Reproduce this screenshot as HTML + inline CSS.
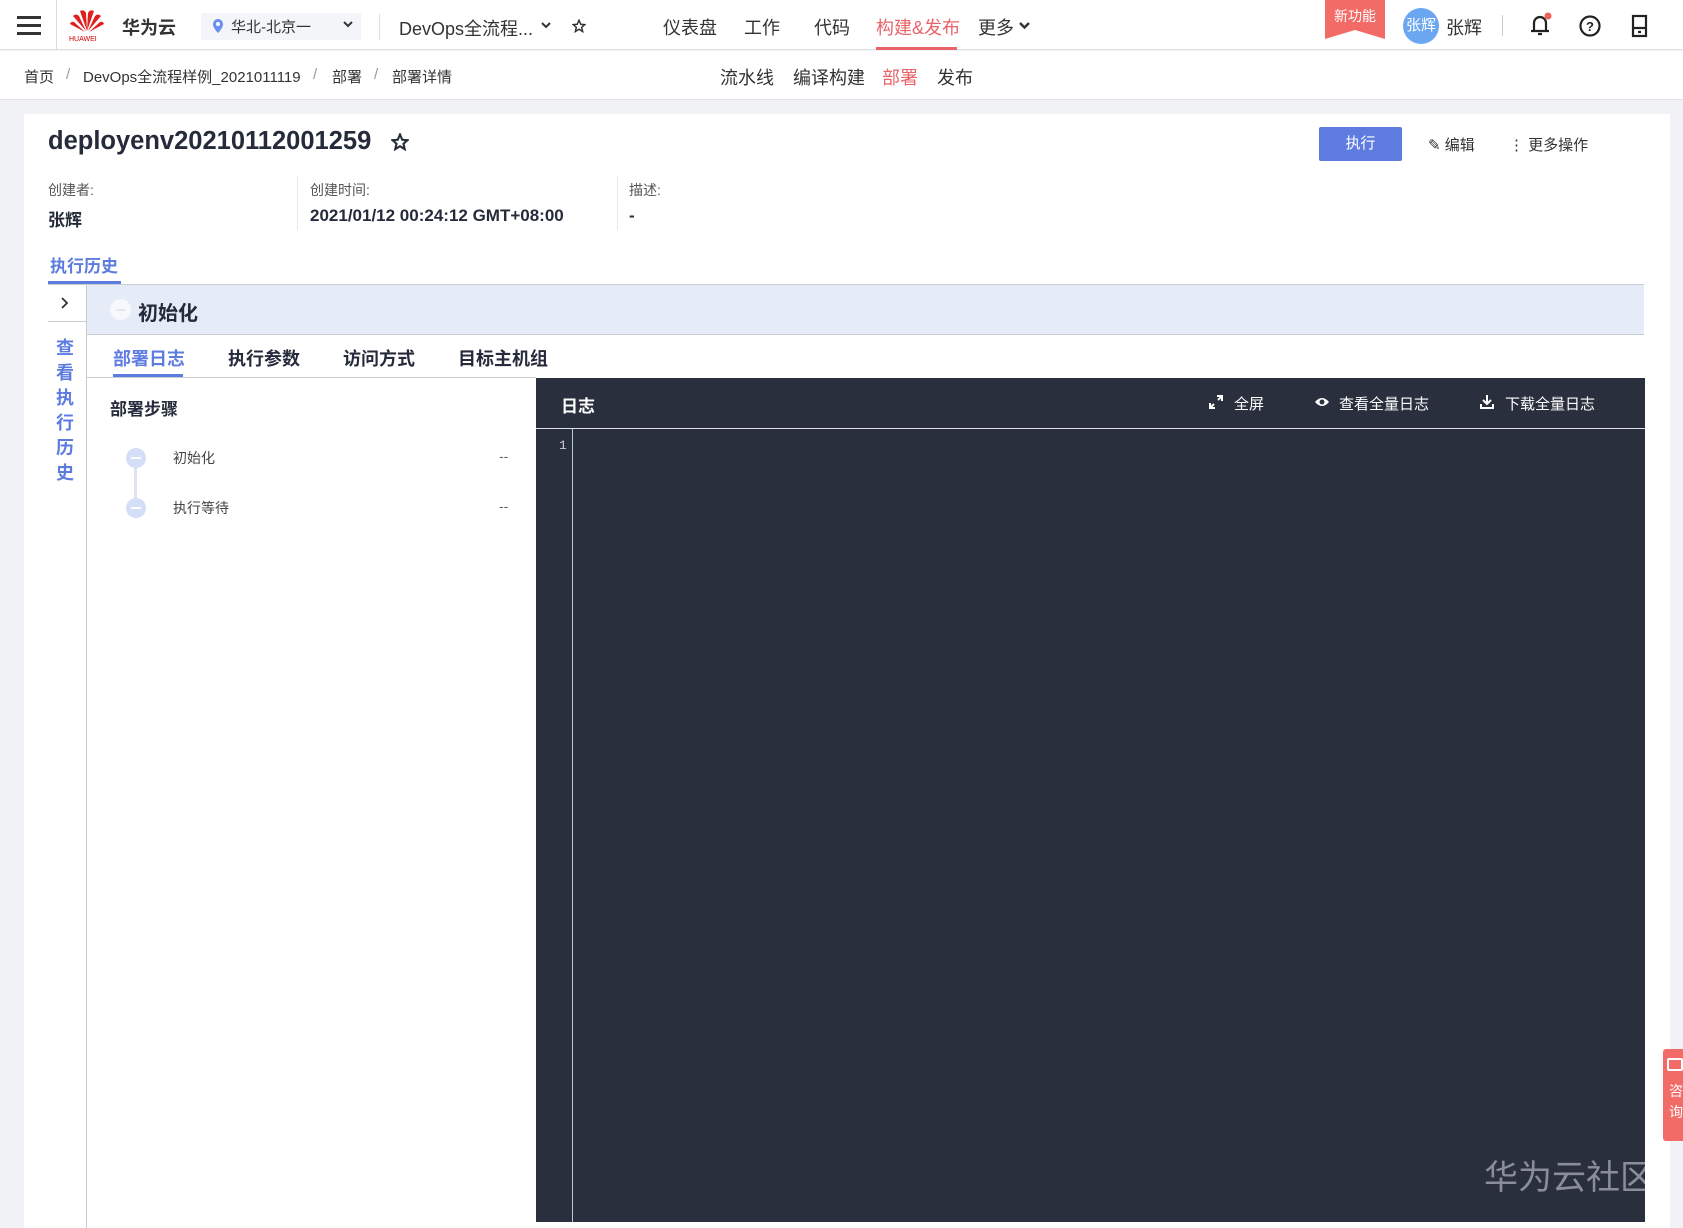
<!DOCTYPE html>
<html><head><meta charset="utf-8">
<style>
*{margin:0;padding:0;box-sizing:border-box}
body{width:1683px;height:1228px;overflow:hidden;background:#f0f2f5;font-family:"Liberation Sans","Noto Sans CJK SC",sans-serif;color:#252b3a;position:relative}
.a{position:absolute;white-space:nowrap}
.bc{position:absolute;top:66px;font-size:15px;color:#333;white-space:nowrap}
</style></head><body>
<!-- header -->
<div class="a" style="left:0;top:0;width:1683px;height:50px;background:#fff;border-bottom:1px solid #dfe1e6"></div>
<div class="a" style="left:17px;top:16px;width:24px;height:3px;background:#333;box-shadow:0 8px 0 #333,0 16px 0 #333"></div>
<div class="a" style="left:56px;top:0;width:1px;height:50px;background:#ddd"></div>
<svg class="a" style="left:68px;top:7px" width="38" height="28" viewBox="0 0 38 28"><g fill="#e0201f"><path d="M19 24 L12 4 Q16 2 18 6Z"/><path d="M19 24 L26 4 Q22 2 20 6Z"/><path d="M18 24 L5 9 Q8 6 11 9Z"/><path d="M20 24 L33 9 Q30 6 27 9Z"/><path d="M17 25 L2 17 Q3 14 6 15Z"/><path d="M21 25 L36 17 Q35 14 32 15Z"/></g></svg>
<div class="a" style="left:69px;top:36px;font-size:7px;color:#c00">HUAWEI</div>
<div class="a" style="left:122px;top:14px;font-size:18px;font-weight:bold;color:#333">华为云</div>
<div class="a" style="left:201px;top:13px;width:160px;height:27px;background:#f3f5f8"></div>
<svg class="a" style="left:212px;top:18px" width="12" height="16"><path d="M6 1a5 5 0 0 1 5 5c0 4-5 9-5 9S1 10 1 6a5 5 0 0 1 5-5z" fill="#6a8ff0"/><circle cx="6" cy="6" r="2" fill="#fff"/></svg>
<div class="a" style="left:231px;top:16px;font-size:15px;color:#333">华北-北京一</div>
<svg class="a" style="left:343px;top:21px" width="10" height="8"><path d="M1 1l4 4 4-4" stroke="#333" stroke-width="2" fill="none"/></svg>
<div class="a" style="left:379px;top:14px;width:1px;height:26px;background:#ddd"></div>
<div class="a" style="left:399px;top:15px;font-size:18px;color:#333">DevOps全流程...</div>
<svg class="a" style="left:541px;top:22px" width="10" height="8"><path d="M1 1l4 4 4-4" stroke="#333" stroke-width="2" fill="none"/></svg>
<svg class="a" style="left:572px;top:19px" width="14" height="14" viewBox="0 0 24 24"><path d="M12 2l3 7 7 .6-5.4 4.7 1.7 7.2L12 17.6 5.7 21.5l1.7-7.2L2 9.6 9 9z" stroke="#333" stroke-width="2.5" fill="none"/></svg>
<div class="a" style="left:663px;top:14px;font-size:18px;color:#333">仪表盘</div>
<div class="a" style="left:744px;top:14px;font-size:18px;color:#333">工作</div>
<div class="a" style="left:814px;top:14px;font-size:18px;color:#333">代码</div>
<div class="a" style="left:876px;top:14px;font-size:18px;color:#e8636a">构建&amp;发布</div>
<div class="a" style="left:876px;top:47px;width:81px;height:3px;background:#e8636a"></div>
<div class="a" style="left:978px;top:14px;font-size:18px;color:#333">更多</div>
<svg class="a" style="left:1019px;top:22px" width="11" height="8"><path d="M1 1l4.5 4.5L10 1" stroke="#333" stroke-width="2.4" fill="none"/></svg>
<svg class="a" style="left:1325px;top:0" width="60" height="39"><path d="M0 0H60V39L30 30L0 39Z" fill="#f26b67"/><text x="30" y="21" font-size="14" fill="#fff" text-anchor="middle" font-family="Liberation Sans,Noto Sans CJK SC,sans-serif">新功能</text></svg>
<div class="a" style="left:1403px;top:8px;width:36px;height:36px;border-radius:50%;background:#6aa7f0;color:#fff;font-size:15px;line-height:36px;text-align:center">张辉</div>
<div class="a" style="left:1446px;top:14px;font-size:18px;color:#333">张辉</div>
<div class="a" style="left:1502px;top:15px;width:1px;height:21px;background:#ccc"></div>
<svg class="a" style="left:1528px;top:12px" width="26" height="26"><path d="M6 19V11a6 6 0 0 1 12 0v8M3 19h18M10 22h4" stroke="#222" stroke-width="2.2" fill="none"/><circle cx="20" cy="4" r="3.5" fill="#f0605a"/></svg>
<svg class="a" style="left:1578px;top:14px" width="24" height="24"><circle cx="12" cy="12" r="9.5" stroke="#222" stroke-width="2.2" fill="none"/><text x="12" y="17" font-size="13" font-weight="bold" text-anchor="middle" fill="#222" font-family="Liberation Sans">?</text></svg>
<svg class="a" style="left:1630px;top:14px" width="20" height="24"><rect x="3" y="2" width="13" height="20" stroke="#222" stroke-width="2.2" fill="none"/><path d="M3 14h13M8 18h3" stroke="#222" stroke-width="2.2"/></svg>
<!-- breadcrumb -->
<div class="a" style="left:0;top:51px;width:1683px;height:49px;background:#fff;border-bottom:1px solid #dfe1e6"></div>
<div class="bc" style="left:24px">首页</div>
<div class="bc" style="left:66px;color:#999">/</div>
<div class="bc" style="left:83px">DevOps全流程样例_2021011119</div>
<div class="bc" style="left:313px;color:#999">/</div>
<div class="bc" style="left:332px">部署</div>
<div class="bc" style="left:374px;color:#999">/</div>
<div class="bc" style="left:392px">部署详情</div>
<div class="a" style="left:720px;top:64px;font-size:18px;color:#333">流水线</div>
<div class="a" style="left:793px;top:64px;font-size:18px;color:#333">编译构建</div>
<div class="a" style="left:882px;top:64px;font-size:18px;color:#e8636a">部署</div>
<div class="a" style="left:937px;top:64px;font-size:18px;color:#333">发布</div>
<!-- card -->
<div class="a" style="left:24px;top:114px;width:1646px;height:1114px;background:#fff"></div>
<div class="a" style="left:48px;top:127px;font-size:25.5px;font-weight:bold;color:#252b3a">deployenv20210112001259</div>
<svg class="a" style="left:391px;top:133px" width="18" height="18" viewBox="0 0 24 24"><path d="M12 2l3 7 7 .6-5.4 4.7 1.7 7.2L12 17.6 5.7 21.5l1.7-7.2L2 9.6 9 9z" stroke="#252b3a" stroke-width="2.8" fill="none"/></svg>
<div class="a" style="left:1319px;top:127px;width:83px;height:34px;background:#5e7ce0;border-radius:2px;color:#fff;font-size:15px;line-height:34px;text-align:center">执行</div>
<div class="a" style="left:1428px;top:134px;font-size:15px;color:#333">✎ 编辑</div>
<div class="a" style="left:1509px;top:134px;font-size:15px;color:#333">⋮ 更多操作</div>
<div class="a" style="left:48px;top:180px;font-size:14px;color:#555">创建者:</div>
<div class="a" style="left:48px;top:206px;font-size:17px;font-weight:bold;color:#252b3a">张辉</div>
<div class="a" style="left:297px;top:176px;width:1px;height:54px;background:#e8e8e8"></div>
<div class="a" style="left:310px;top:180px;font-size:14px;color:#555">创建时间:</div>
<div class="a" style="left:310px;top:206px;font-size:17px;font-weight:bold;color:#252b3a">2021/01/12 00:24:12 GMT+08:00</div>
<div class="a" style="left:617px;top:176px;width:1px;height:54px;background:#e8e8e8"></div>
<div class="a" style="left:629px;top:180px;font-size:14px;color:#555">描述:</div>
<div class="a" style="left:629px;top:206px;font-size:17px;font-weight:bold;color:#252b3a">-</div>
<div class="a" style="left:50px;top:252px;font-size:17px;font-weight:bold;color:#5e7ce0">执行历史</div>
<div class="a" style="left:48px;top:281px;width:73px;height:3px;background:#5e7ce0"></div>
<div class="a" style="left:48px;top:284px;width:1596px;height:1px;background:#c8ccd4"></div>
<!-- side col -->
<div class="a" style="left:86px;top:285px;width:1px;height:943px;background:#c8ccd4"></div>
<svg class="a" style="left:61px;top:297px" width="8" height="12"><path d="M1 1l5 5-5 5" stroke="#333" stroke-width="1.8" fill="none"/></svg>
<div class="a" style="left:48px;top:321px;width:38px;height:1px;background:#c8ccd4"></div>
<div class="a" style="left:56px;top:336px;font-size:18px;font-weight:bold;color:#5e7ce0;line-height:25px;white-space:normal;width:20px">查看执行历史</div>
<!-- stage header -->
<div class="a" style="left:87px;top:285px;width:1557px;height:50px;background:#e6ebf8;border-bottom:1px solid #c8ccd4"></div>
<div class="a" style="left:110px;top:299px;width:21px;height:21px;border-radius:50%;background:#f7f8fc"><div style="margin:9.5px 6px;width:9px;height:2px;background:#e3e7f2"></div></div>
<div class="a" style="left:138px;top:297px;font-size:20px;font-weight:bold;color:#252b3a">初始化</div>
<!-- tabs -->
<div class="a" style="left:113px;top:345px;font-size:18px;font-weight:bold;color:#5e7ce0">部署日志</div>
<div class="a" style="left:113px;top:374px;width:70px;height:3px;background:#5e7ce0"></div>
<div class="a" style="left:228px;top:345px;font-size:18px;font-weight:bold;color:#252b3a">执行参数</div>
<div class="a" style="left:343px;top:345px;font-size:18px;font-weight:bold;color:#252b3a">访问方式</div>
<div class="a" style="left:458px;top:345px;font-size:18px;font-weight:bold;color:#252b3a">目标主机组</div>
<div class="a" style="left:87px;top:377px;width:449px;height:1px;background:#c8ccd4"></div>
<!-- steps -->
<div class="a" style="left:110px;top:395px;font-size:17px;font-weight:bold;color:#252b3a">部署步骤</div>
<div class="a" style="left:134px;top:458px;width:3px;height:50px;background:#dfe3ec"></div>
<div class="a" style="left:126px;top:448px;width:20px;height:20px;border-radius:50%;background:#d4def7"><div style="margin:9px 5px;width:10px;height:2px;background:#fff"></div></div>
<div class="a" style="left:126px;top:498px;width:20px;height:20px;border-radius:50%;background:#d4def7"><div style="margin:9px 5px;width:10px;height:2px;background:#fff"></div></div>
<div class="a" style="left:173px;top:448px;font-size:14px;color:#444">初始化</div>
<div class="a" style="left:173px;top:498px;font-size:14px;color:#444">执行等待</div>
<div class="a" style="left:499px;top:448px;font-size:14px;color:#666">--</div>
<div class="a" style="left:499px;top:498px;font-size:14px;color:#666">--</div>
<!-- log -->
<div class="a" style="left:536px;top:378px;width:1109px;height:844px;background:#2a2f3d"></div>
<div class="a" style="left:536px;top:428px;width:1109px;height:1px;background:#dde"></div>
<div class="a" style="left:561px;top:392px;font-size:17px;font-weight:bold;color:#fff">日志</div>
<svg class="a" style="left:1209px;top:395px" width="14" height="14"><path d="M8 1h5v5M13 1L9 5M1 8v5h5M1 13l4-4" stroke="#fff" stroke-width="2" fill="none"/></svg>
<div class="a" style="left:1234px;top:393px;font-size:15px;color:#fff">全屏</div>
<svg class="a" style="left:1314px;top:396px" width="16" height="12"><path d="M1 6Q8-2 15 6Q8 14 1 6Z" fill="#fff"/><circle cx="8" cy="6" r="2.5" fill="#2a2f3d"/></svg>
<div class="a" style="left:1339px;top:393px;font-size:15px;color:#fff">查看全量日志</div>
<svg class="a" style="left:1480px;top:394px" width="14" height="15"><path d="M7 1v8M3 6l4 4 4-4M1 10v4h12v-4" stroke="#fff" stroke-width="2" fill="none"/></svg>
<div class="a" style="left:1505px;top:393px;font-size:15px;color:#fff">下载全量日志</div>
<div class="a" style="left:572px;top:429px;width:1px;height:793px;background:#bcc"></div>
<div class="a" style="left:559px;top:438px;font-size:13px;color:#ccc;font-family:'Liberation Mono',monospace">1</div>
<div class="a" style="left:1484px;top:1150px;font-size:34px;color:#8a8e99">华为云社区</div>
<div class="a" style="left:1645px;top:1140px;width:25px;height:88px;background:#fff"></div>
<div class="a" style="left:1663px;top:1049px;width:25px;height:92px;background:#f26b67;border-radius:3px 0 0 3px;color:#fff;font-size:14px;padding:32px 0 0 6px;line-height:21px;white-space:normal;width:25px">咨询</div>
<div class="a" style="left:1667px;top:1058px;width:16px;height:13px;border:2px solid #fff;border-radius:2px"></div>
</body></html>
